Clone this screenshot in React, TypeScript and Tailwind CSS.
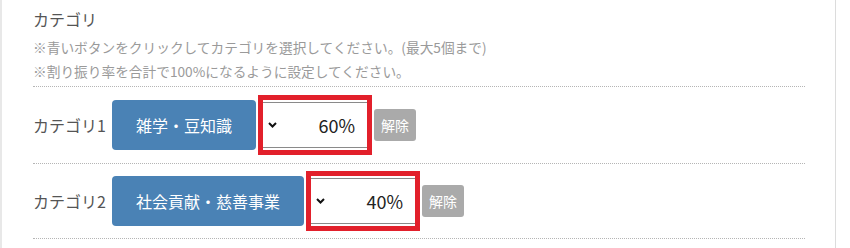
import React from "react";

const font = { fontFamily: '"Noto Sans CJK JP", "Noto Sans", sans-serif' };

function Chevron() {
  return (
    <svg width="9" height="6" viewBox="0 0 9 6" className="shrink-0">
      <polyline points="1,1 4.5,4.5 8,1" fill="none" stroke="#111" strokeWidth="2" />
    </svg>
  );
}

function Row({
  label,
  name,
  pct,
  pad,
}: {
  label: string;
  name: string;
  pct: string;
  pad: string;
}) {
  return (
    <div className={`flex items-center border-b border-dotted border-[#b5b5b5] ${pad}`}>
      <span className="text-[16px] leading-none text-[#555] w-[79px] whitespace-nowrap">{label}</span>
      <div className="h-[50px] px-6 rounded-[4px] bg-[#4a82b5] text-white text-[16px] flex items-center whitespace-nowrap">
        {name}
      </div>
      <div className="relative ml-[7px] w-[104px] h-[46px] border-y border-[#8a8a8a] bg-white flex items-center pl-[5px] pr-[12px]">
        <Chevron />
        <span className="ml-auto text-[18px] text-[#222] leading-none">{pct}</span>
        <div className="absolute -left-[5px] -right-[5px] -top-[8px] -bottom-[8px] border-[5px] border-[#e2202b] pointer-events-none" />
      </div>
      <div className="ml-[7px] w-[42px] h-[32px] rounded-[3px] bg-[#aaaaaa] text-white text-[14px] flex items-center justify-center">
        解除
      </div>
    </div>
  );
}

export default function App() {
  return (
    <div className="w-[850px] h-[248px] bg-white overflow-hidden" style={font}>
      <div className="w-[836px] h-[248px] border-l-2 border-r border-l-[#e8e8e8] border-r-[#dcdcdc] pl-[31px] pr-[30px]">
        <div className="border-b border-dotted border-[#b5b5b5] pt-[5px] pb-[3px]">
          <div className="text-[16px] leading-[28px] text-[#555]">カテゴリ</div>
          <div className="mt-[2px] text-[13.7px] leading-[24px] text-[#9a9a9a]">
            ※青いボタンをクリックしてカテゴリを選択してください。(最大5個まで)
          </div>
          <div className="text-[13.7px] leading-[24px] text-[#9a9a9a]">
            ※割り振り率を合計で100%になるように設定してください。
          </div>
        </div>
        <Row label="カテゴリ1" name="雑学・豆知識" pct="60%" pad="py-[13px]" />
        <Row label="カテゴリ2" name="社会貢献・慈善事業" pct="40%" pad="py-3" />
      </div>
    </div>
  );
}
